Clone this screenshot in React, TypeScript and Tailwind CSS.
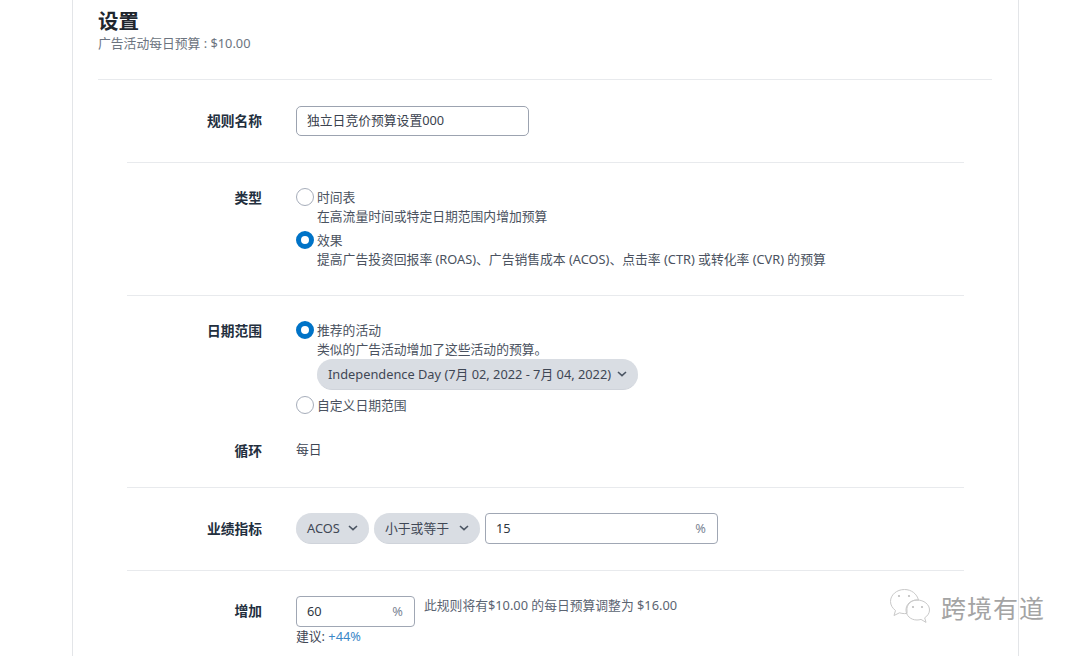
const font = { fontFamily: '"Noto Sans", "Noto Sans CJK SC", sans-serif' };

function Radio({ on }: { on?: boolean }) {
  return on ? (
    <span className="w-[18px] h-[18px] rounded-full border-[5px] border-[#0073c7] bg-white shrink-0" />
  ) : (
    <span className="w-[18px] h-[18px] rounded-full border border-[#a6adba] bg-white shrink-0" />
  );
}

function Chevron() {
  return (
    <svg width="10" height="6" viewBox="0 0 10 6" className="shrink-0">
      <path d="M1 1l4 3.6L9 1" fill="none" stroke="#4b5563" strokeWidth="1.6" />
    </svg>
  );
}

function Pill({ children, className }: { children: React.ReactNode; className: string }) {
  return (
    <div className={`h-[31px] rounded-full bg-[#d9dde3] border-b border-[#cfd3da] flex items-center justify-between text-[12.8px] text-[#3f4755] ${className}`}>
      {children}
    </div>
  );
}

function Label({ children, className = "" }: { children: React.ReactNode; className?: string }) {
  return (
    <div className={`w-[135px] shrink-0 text-right text-[13.75px] font-bold leading-[18px] text-[#232f3e] ${className}`}>
      {children}
    </div>
  );
}

function PercentBox({ value, className }: { value: string; className: string }) {
  return (
    <div className={`h-[31px] rounded-[4px] border border-[#a0a7b4] bg-white flex items-center justify-between pl-[10px] pr-[11px] text-[12.8px] ${className}`}>
      <span className="text-[#2f3742]">{value}</span>
      <span className="text-[#7b8594]">%</span>
    </div>
  );
}

export default function App() {
  return (
    <div style={font} className="w-[1080px] h-[656px] bg-white overflow-hidden relative">
      <div className="ml-[72px] w-[947px] h-[656px] border-x border-[#e3e5e8] px-[25px] pt-[8px]">
        <div className="text-[20.5px] font-bold leading-[26px] text-[#20262e]">设置</div>
        <div className="text-[12.8px] leading-[18px] text-[#6c7480]">广告活动每日预算 : $10.00</div>
        <div className="h-px bg-[#e8eaed] mt-[27px] mr-[1px]" />

        <div className="mx-[29px]">
          <div className="flex gap-[34px] items-center pt-[26px] pb-[26px] border-b border-[#e8eaed]">
            <Label className="mb-[1px]">规则名称</Label>
            <div className="w-[233px] h-[30px] rounded-[5px] border border-[#9ca3b0] flex items-center pl-[10px] text-[12.8px] text-[#3a424e]">
              独立日竞价预算设置000
            </div>
          </div>

          <div className="flex gap-[34px] pt-[25px] pb-[27px] border-b border-[#e8eaed]">
            <Label className="pt-[1px]">类型</Label>
            <div className="text-[12.8px] leading-[18px] text-[#4a5260]">
              <div className="flex items-center gap-[3px] h-[18px]">
                <Radio />
                <span>时间表</span>
              </div>
              <div className="ml-[21px] mt-[1px]">在高流量时间或特定日期范围内增加预算</div>
              <div className="flex items-center gap-[3px] h-[18px] mt-[6px]">
                <Radio on />
                <span>效果</span>
              </div>
              <div className="ml-[21px] mt-[1px]">提高广告投资回报率 (ROAS)、广告销售成本 (ACOS)、点击率 (CTR) 或转化率 (CVR) 的预算</div>
            </div>
          </div>

          <div className="pt-[25px] pb-[27px] border-b border-[#e8eaed]">
            <div className="flex gap-[34px]">
              <Label className="pt-[1px]">日期范围</Label>
              <div className="text-[12.8px] leading-[18px] text-[#4a5260]">
                <div className="flex items-center gap-[3px] h-[18px]">
                  <Radio on />
                  <span>推荐的活动</span>
                </div>
                <div className="ml-[21px] mt-[1px]">类似的广告活动增加了这些活动的预算。</div>
                <Pill className="ml-[21px] mt-[1px] w-[321px] pl-[11px] pr-[11px]">
                  <span>Independence Day (7月 02, 2022 - 7月 04, 2022)</span>
                  <Chevron />
                </Pill>
                <div className="flex items-center gap-[3px] h-[18px] mt-[6px]">
                  <Radio />
                  <span>自定义日期范围</span>
                </div>
              </div>
            </div>
            <div className="flex gap-[34px] mt-[28px]">
              <Label>循环</Label>
              <div className="text-[12.8px] leading-[18px] text-[#3f4755] -mt-[2px]">每日</div>
            </div>
          </div>

          <div className="flex gap-[34px] items-center pt-[25px] pb-[26px] border-b border-[#e8eaed]">
            <Label className="pt-[1px]">业绩指标</Label>
            <div className="flex items-center gap-[5px]">
              <Pill className="w-[73px] pl-[11px] pr-[11px]">
                <span className="pt-px">ACOS</span>
                <Chevron />
              </Pill>
              <Pill className="w-[106px] pl-[11px] pr-[11px]">
                <span className="pt-px">小于或等于</span>
                <Chevron />
              </Pill>
              <PercentBox value="15" className="w-[233px]" />
            </div>
          </div>

          <div className="flex gap-[34px] pt-[25px]">
            <Label className="pt-[6px]">增加</Label>
            <div>
              <div className="flex items-start gap-[9px]">
                <PercentBox value="60" className="w-[119px]" />
                <div className="text-[12.8px] leading-[18px] text-[#5b6472]">此规则将有$10.00 的每日预算调整为 $16.00</div>
              </div>
              <div className="text-[12.8px] leading-[18px] text-[#3f4755]">
                建议: <span className="text-[#3a87c8]">+44%</span>
              </div>
            </div>
          </div>
        </div>
      </div>

      <div className="absolute left-[889px] top-[588px] flex items-center gap-[5px] text-[#a9a9a9]">
        <svg width="47" height="38" viewBox="0 0 47 38" fill="none" stroke="#c9c9c9" strokeWidth="1">
          <path d="M18 23c-1-6 4-11 10-11 .5 0 1 0 1.500.1C28 6 22.500 1.500 15.500 1.500 7.500 1.500 1.500 7 1.500 13.500c0 3.500 2 6.800 5 9L5 27.500l5.500-2.700c1.500.5 3.200.800 5 .8.800 0 1.700-.1 2.500-.2z" />
          <path d="M28 12c-6.500 0-11 4.500-11 10s4.500 10 11 10c1.500 0 2.700-.2 4-.6l5 3-1.300-4.600c3-2 4.800-4.700 4.800-7.800 0-5.500-5.500-10-12.500-10z" />
          <circle cx="10" cy="8" r="1.100" fill="#bdbdbd" stroke="none" />
          <circle cx="20" cy="8" r="1.100" fill="#bdbdbd" stroke="none" />
          <circle cx="24" cy="19" r="1.100" fill="#bdbdbd" stroke="none" />
          <circle cx="33" cy="19" r="1.100" fill="#bdbdbd" stroke="none" />
        </svg>
        <span className="text-[25px] leading-[38px] tracking-[1px] text-[#a4a4a4]" style={{ fontFamily: '"Noto Sans CJK SC", sans-serif' }}>跨境有道</span>
      </div>
    </div>
  );
}
